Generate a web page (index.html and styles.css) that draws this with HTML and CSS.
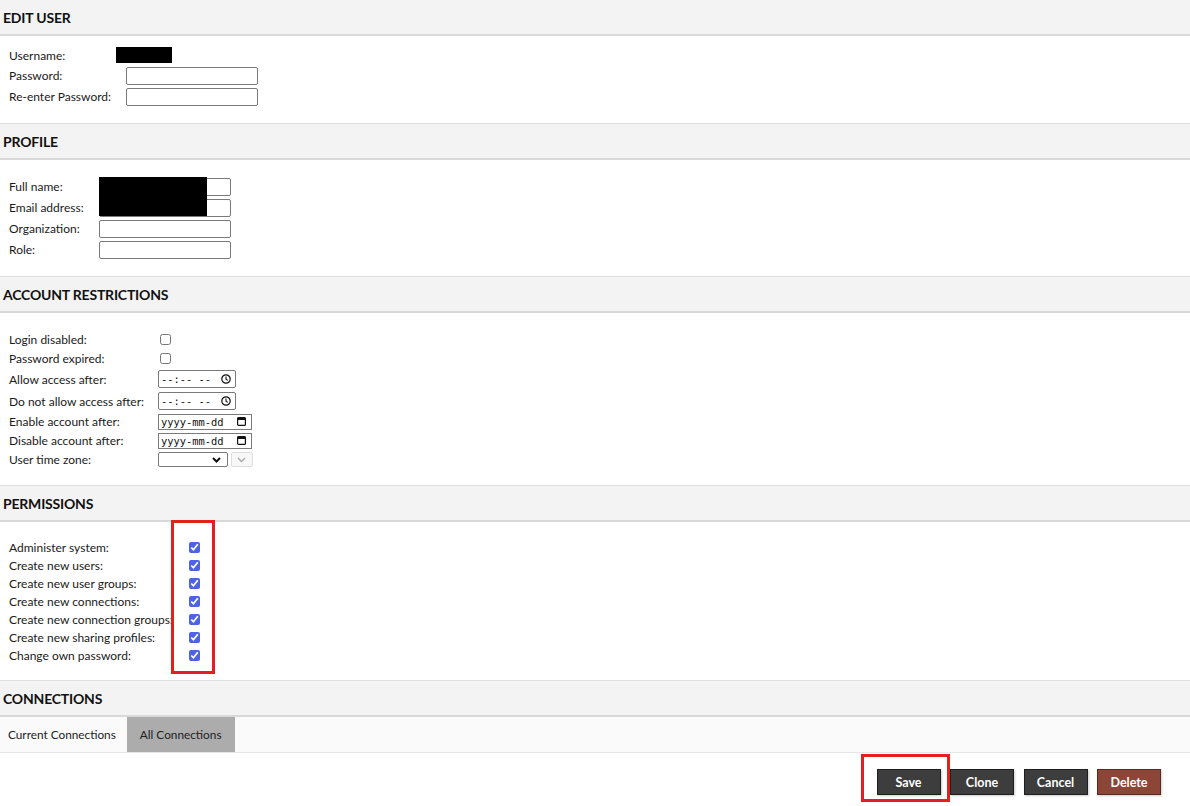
FILE: index.html
```html
<!DOCTYPE html>
<html lang="en">

<head>
    <meta charset="UTF-8">
    <meta name="viewport" content="width=device-width, initial-scale=1.0">
    <title>Edit User</title>
    <link rel="stylesheet" href="styles.css">
</head>

<body>
    <div class="page">
        <section class="section">
            <h2 class="section-title">Edit User</h2>
            <div class="section-body body-user">
                <table class="properties">
                    <tr class="row-text">
                        <th>Username:</th>
                        <td></td>
                    </tr>
                    <tr class="row-input">
                        <th>Password:</th>
                        <td><input class="field field-text" type="password"></td>
                    </tr>
                    <tr class="row-input">
                        <th>Re-enter Password:</th>
                        <td><input class="field field-text" type="password"></td>
                    </tr>
                </table>
            </div>
        </section>

        <section class="section">
            <h2 class="section-title">Profile</h2>
            <div class="section-body">
                <table class="properties">
                    <tr class="row-input">
                        <th>Full name:</th>
                        <td><input class="field field-text" type="text"></td>
                    </tr>
                    <tr class="row-input">
                        <th>Email address:</th>
                        <td><input class="field field-text" type="text"></td>
                    </tr>
                    <tr class="row-input">
                        <th>Organization:</th>
                        <td><input class="field field-text" type="text"></td>
                    </tr>
                    <tr class="row-input">
                        <th>Role:</th>
                        <td><input class="field field-text" type="text"></td>
                    </tr>
                </table>
            </div>
        </section>

        <section class="section">
            <h2 class="section-title">Account Restrictions</h2>
            <div class="section-body body-restrict">
                <table class="properties">
                    <tr class="row-check">
                        <th>Login disabled:</th>
                        <td><input class="check" type="checkbox"></td>
                    </tr>
                    <tr class="row-check">
                        <th>Password expired:</th>
                        <td><input class="check" type="checkbox"></td>
                    </tr>
                    <tr class="row-time">
                        <th>Allow access after:</th>
                        <td>
                            <div class="field field-time">
                                <span class="mask">--:-- --</span>
                                <svg class="clock" width="10" height="10" viewBox="0 0 10 10">
                                    <circle cx="5" cy="5" r="4.2" fill="none" stroke="#111" stroke-width="1.2" />
                                    <path d="M5 2.6V5.2L6.8 6.4" fill="none" stroke="#111" stroke-width="1.1" />
                                </svg>
                            </div>
                        </td>
                    </tr>
                    <tr class="row-time">
                        <th>Do not allow access after:</th>
                        <td>
                            <div class="field field-time">
                                <span class="mask">--:-- --</span>
                                <svg class="clock" width="10" height="10" viewBox="0 0 10 10">
                                    <circle cx="5" cy="5" r="4.2" fill="none" stroke="#111" stroke-width="1.2" />
                                    <path d="M5 2.6V5.2L6.8 6.4" fill="none" stroke="#111" stroke-width="1.1" />
                                </svg>
                            </div>
                        </td>
                    </tr>
                    <tr class="row-date">
                        <th>Enable account after:</th>
                        <td>
                            <div class="field field-date">
                                <span class="mask">yyyy-mm-dd</span>
                                <svg class="cal" width="9" height="9" viewBox="0 0 9 9">
                                    <rect x="0.6" y="0.6" width="7.8" height="7.8" rx="1" fill="none" stroke="#111" stroke-width="1.2" />
                                    <rect x="0.6" y="0.6" width="7.8" height="2.4" fill="#111" />
                                </svg>
                            </div>
                        </td>
                    </tr>
                    <tr class="row-date">
                        <th>Disable account after:</th>
                        <td>
                            <div class="field field-date">
                                <span class="mask">yyyy-mm-dd</span>
                                <svg class="cal" width="9" height="9" viewBox="0 0 9 9">
                                    <rect x="0.6" y="0.6" width="7.8" height="7.8" rx="1" fill="none" stroke="#111" stroke-width="1.2" />
                                    <rect x="0.6" y="0.6" width="7.8" height="2.4" fill="#111" />
                                </svg>
                            </div>
                        </td>
                    </tr>
                    <tr class="row-date">
                        <th>User time zone:</th>
                        <td>
                            <div class="zone">
                                <div class="field field-select">
                                    <svg width="9" height="6" viewBox="0 0 9 6">
                                        <path d="M1 1L4.5 4.5L8 1" fill="none" stroke="#111" stroke-width="2" />
                                    </svg>
                                </div>
                                <div class="field field-select is-disabled">
                                    <svg width="9" height="6" viewBox="0 0 9 6">
                                        <path d="M1 1L4.5 4.5L8 1" fill="none" stroke="#aaa" stroke-width="1.4" />
                                    </svg>
                                </div>
                            </div>
                        </td>
                    </tr>
                </table>
            </div>
        </section>

        <section class="section">
            <h2 class="section-title">Permissions</h2>
            <div class="section-body">
                <table class="properties">
                    <tr class="row-perm">
                        <th>Administer system:</th>
                        <td><input class="check" type="checkbox" checked></td>
                    </tr>
                    <tr class="row-perm">
                        <th>Create new users:</th>
                        <td><input class="check" type="checkbox" checked></td>
                    </tr>
                    <tr class="row-perm">
                        <th>Create new user groups:</th>
                        <td><input class="check" type="checkbox" checked></td>
                    </tr>
                    <tr class="row-perm">
                        <th>Create new connections:</th>
                        <td><input class="check" type="checkbox" checked></td>
                    </tr>
                    <tr class="row-perm">
                        <th>Create new connection groups:</th>
                        <td><input class="check" type="checkbox" checked></td>
                    </tr>
                    <tr class="row-perm">
                        <th>Create new sharing profiles:</th>
                        <td><input class="check" type="checkbox" checked></td>
                    </tr>
                    <tr class="row-perm">
                        <th>Change own password:</th>
                        <td><input class="check" type="checkbox" checked></td>
                    </tr>
                </table>
            </div>
        </section>

        <section class="section">
            <h2 class="section-title">Connections</h2>
            <ul class="tabs">
                <li class="tab tab-first">Current Connections</li>
                <li class="tab is-current">All Connections</li>
            </ul>
        </section>

        <div class="actions">
            <button class="btn">Save</button>
            <button class="btn">Clone</button>
            <button class="btn">Cancel</button>
            <button class="btn btn-danger">Delete</button>
        </div>

        <!-- redacted values -->
        <div class="redact redact-user"></div>
        <div class="redact redact-profile"></div>

        <!-- highlight marks -->
        <div class="mark mark-perms"></div>
        <div class="mark mark-save"></div>
    </div>
</body>

</html>
```

FILE: styles.css
```css
* {
    margin: 0;
    padding: 0;
    box-sizing: border-box;
}

html,
body {
    height: 100%;
    background: #fff;
}

body {
    overflow: hidden;
    font-family: Lato, "Noto Sans", "Liberation Sans", sans-serif;
    font-size: 12px;
    color: #1a1a1a;
}

.page {
    position: relative;
    min-height: 100%;
}

/* 分区标题 */
.section-title {
    height: 37px;
    padding-left: 3px;
    display: flex;
    align-items: center;
    background: #f3f3f3;
    border-top: 1px solid #dedede;
    border-bottom: 2px solid #d8d8d8;
    font-size: 14px;
    font-weight: bold;
    letter-spacing: -0.2px;
    text-transform: uppercase;
    color: #111;
}

.section:first-child .section-title {
    height: 36px;
    border-top: 0;
}

.section-body {
    padding: 15px 7px 15px;
}

.body-user {
    padding-top: 9px;
}

.body-restrict {
    padding-top: 16px;
}

/* 属性表格 */
.properties {
    border-collapse: separate;
    border-spacing: 2px;
}

.properties th {
    padding: 0 12px 0 0;
    text-align: left;
    font-weight: normal;
    white-space: nowrap;
    vertical-align: middle;
}

.properties td {
    padding: 0;
    vertical-align: middle;
}

.row-text {
    height: 17px;
}

.row-input {
    height: 19px;
}

.row-check {
    height: 17px;
}

.row-time {
    height: 20px;
}

.row-date {
    height: 17px;
}

.row-perm {
    height: 16px;
}

.field {
    display: flex;
    align-items: center;
    border: 1px solid #7a7a7a;
    border-radius: 2px;
    background: #fff;
}

.field-text {
    width: 132px;
    height: 18px;
    margin-left: 1px;
    font: inherit;
    outline: none;
}

.mask {
    flex: 1;
    padding-left: 2px;
    font-family: "DejaVu Sans Mono", "Liberation Mono", monospace;
    font-size: 10.4px;
    color: #111;
}

.field-time {
    width: 78px;
    height: 18px;
}

.clock {
    margin-right: 4px;
}

.field-date {
    width: 94px;
    height: 16px;
    border-radius: 0;
}

.cal {
    margin-right: 5px;
}

.zone {
    display: flex;
    gap: 3px;
}

.field-select {
    width: 70px;
    height: 15px;
    justify-content: flex-end;
    padding-right: 6px;
}

.field-select.is-disabled {
    width: 22px;
    padding-right: 6px;
    border-color: #dcdcdc;
    background: #f7f7f7;
}

.check {
    display: block;
    width: 11px;
    height: 11px;
    margin: 0 3px 0 2px;
    accent-color: #4d62e8;
}

/* 连接页签 */
.tabs {
    display: flex;
    list-style: none;
    height: 36px;
    background: #fafafa;
    border-bottom: 1px solid #e6e6e6;
}

.tab {
    display: flex;
    align-items: center;
    padding: 0 13px;
    font-size: 11.8px;
    color: #222;
}

.tab-first {
    padding: 0 11px 0 8px;
}

.tab.is-current {
    background: #acacac;
}

/* 操作按钮 */
.actions {
    display: flex;
    justify-content: flex-end;
    gap: 9.5px;
    padding: 16px 29px 0 0;
}

.btn {
    width: 64px;
    height: 26px;
    border: 1px solid #1e1e1e;
    background: #3d3d3d;
    color: #fff;
    font-family: Lato, "Noto Sans", sans-serif;
    font-size: 12.5px;
    font-weight: bold;
    box-shadow: 1px 1px 2px rgba(0, 0, 0, 0.2);
}

.btn-danger {
    background: #8c4638;
    border-color: #5a2a20;
}

/* 打码 */
.redact {
    position: absolute;
    background: #000;
}

.redact-user {
    left: 116px;
    top: 47px;
    width: 56px;
    height: 16px;
}

.redact-profile {
    left: 99px;
    top: 177px;
    width: 108px;
    height: 39px;
}

/* 红框标注 */
.mark {
    position: absolute;
    border: 3px solid #e3201f;
}

.mark-perms {
    left: 171px;
    top: 520px;
    width: 44px;
    height: 154px;
}

.mark-save {
    left: 861px;
    top: 754px;
    width: 89px;
    height: 48px;
}
```
